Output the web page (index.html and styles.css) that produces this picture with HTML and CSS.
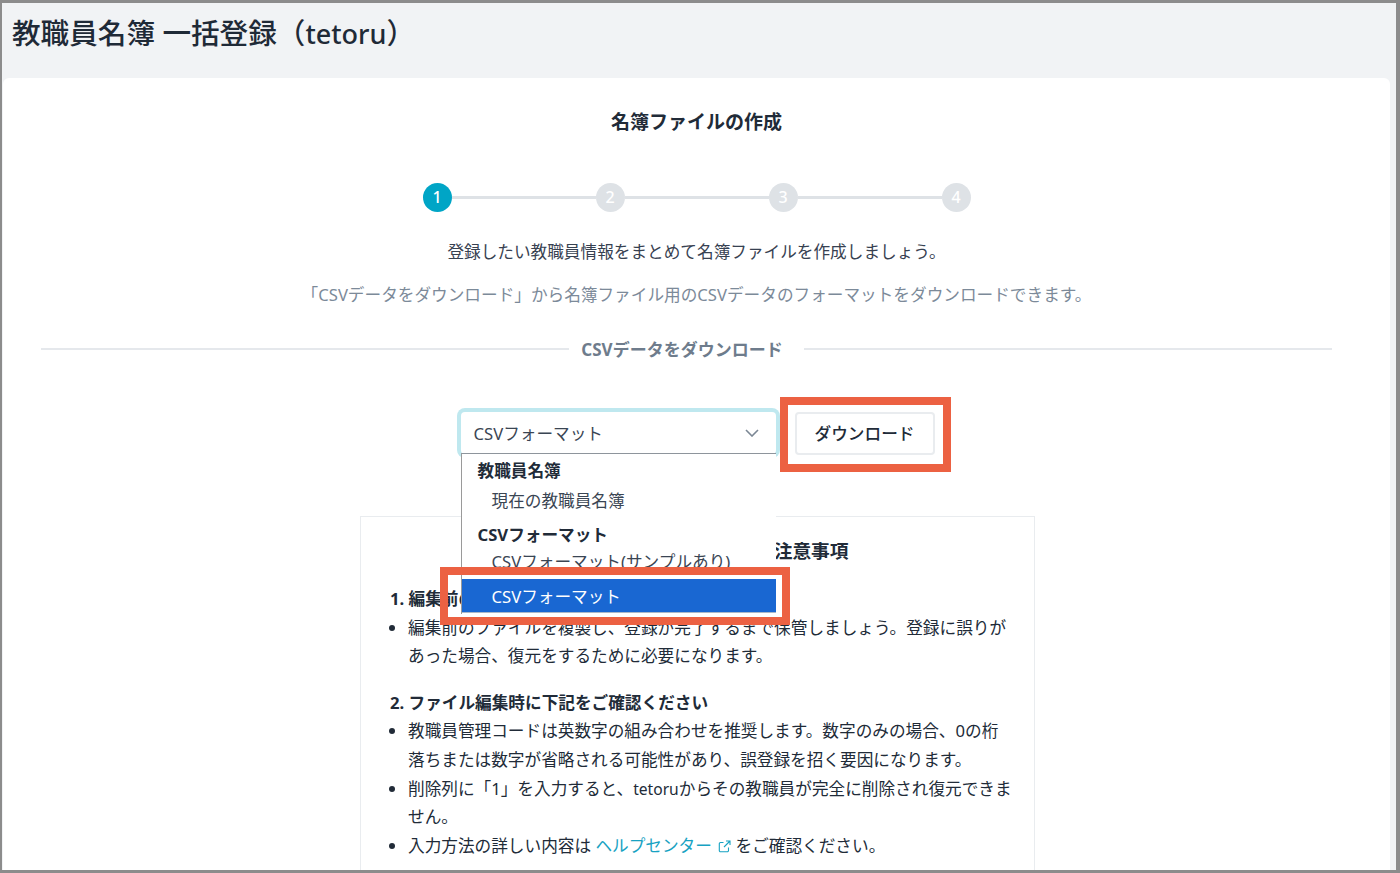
FILE: index.html
```html
<!DOCTYPE html>
<html lang="ja">
<head>
    <meta charset="UTF-8">
    <title>教職員名簿 一括登録（tetoru）</title>
    <link rel="stylesheet" href="styles.css">
</head>
<body>
	<div class="frame">
		<div class="page-header">
			<h1 class="page-title">教職員名簿 一括登録（<span class="title-latin">tetoru</span>）</h1>
		</div>

		<div class="card">
			<h2 class="card-title">名簿ファイルの作成</h2>

			<div class="steps">
				<div class="step active">1</div>
				<div class="step-line"></div>
				<div class="step">2</div>
				<div class="step-line"></div>
				<div class="step">3</div>
				<div class="step-line"></div>
				<div class="step">4</div>
			</div>

			<p class="lead">登録したい教職員情報をまとめて名簿ファイルを作成しましょう。</p>
			<p class="sub">「CSVデータをダウンロード」から名簿ファイル用のCSVデータのフォーマットをダウンロードできます。</p>

			<div class="divider">
				<span class="divider-text">CSVデータをダウンロード</span>
			</div>

			<div class="download-row">
				<div class="select-wrap">
					<div class="select">
						<span>CSVフォーマット</span>
						<svg class="chevron" width="14" height="8" viewBox="0 0 14 8"><path d="M1 1l6 6 6-6" fill="none" stroke="#7b8794" stroke-width="1.6"/></svg>
					</div>
					<div class="dropdown">
						<div class="group">教職員名簿</div>
						<div class="option">現在の教職員名簿</div>
						<div class="group second">CSVフォーマット</div>
						<div class="option clipped">CSVフォーマット(サンプルあり)</div>
						<div class="option selected">CSVフォーマット</div>
					</div>
					<div class="mark mark-option"></div>
				</div>
				<button class="download-button">ダウンロード</button>
				<div class="mark mark-button"></div>
			</div>

			<div class="notes">
				<h3 class="notes-title">名簿ファイル編集に関する注意事項</h3>

				<p class="notes-head">1. 編集前のファイルを保管してください</p>
				<ul class="notes-list">
					<li>編集前のファイルを複製し、登録が完了するまで保管しましょう。登録に誤りがあった場合、復元をするために必要になります。</li>
				</ul>

				<p class="notes-head gap">2. ファイル編集時に下記をご確認ください</p>
				<ul class="notes-list">
					<li>教職員管理コードは英数字の組み合わせを推奨します。数字のみの場合、0の桁落ちまたは数字が省略される可能性があり、誤登録を招く要因になります。</li>
					<li>削除列に「1」を入力すると、<span class="list-latin">tetoru</span>からその教職員が完全に削除され復元できません。</li>
					<li>入力方法の詳しい内容は <a class="link" href="#">ヘルプセンター <svg class="ext" width="13" height="13" viewBox="0 0 13 13"><path d="M10.5 7.5v3a1.2 1.2 0 0 1-1.2 1.2H2.5a1.2 1.2 0 0 1-1.2-1.2V3.7a1.2 1.2 0 0 1 1.2-1.2h3M8 1h4v4M12 1L6 7" fill="none" stroke="#17a2c2" stroke-width="1.1"/></svg></a> をご確認ください。</li>
				</ul>
			</div>
		</div>
	</div>
</body>
</html>
```

FILE: styles.css
```css
* {
	box-sizing: border-box;
}

html, body {
	margin: 0;
	padding: 0;
}

body {
	font-family: "Noto Sans", "Noto Sans CJK JP", sans-serif;
	color: #212b38;
	background: #8c8c8c;
}

.frame {
	width: 1400px;
	height: 873px;
	border-style: solid;
	border-color: #8c8c8c;
	border-width: 3px 4px 3px 2px;
	background: #f1f3f5;
	overflow: hidden;
}

.page-header {
	height: 75px;
	padding: 10px 10px 0;
}

.page-title {
	margin: 0;
	font-size: 28.6px;
	line-height: 40px;
	font-weight: 500;
	color: #1f2a37;
}

.title-latin {
	font-size: 27px;
}

.card {
	width: 1387px;
	margin-left: 1px;
	height: 800px;
	background: #fff;
	border-radius: 6px 6px 0 0;
	padding: 30px 38px 0;
	text-align: center;
}

.card-title {
	margin: 0;
	font-size: 19px;
	line-height: 28px;
	font-weight: 700;
	color: #212b38;
}

.steps {
	display: flex;
	align-items: center;
	justify-content: center;
	margin: 47px 0 0;
}

.step {
	width: 29px;
	height: 29px;
	flex: none;
	border-radius: 50%;
	background: #dee2e6;
	color: #fff;
	font-size: 16px;
	font-weight: 500;
	line-height: 29px;
	text-align: center;
}

.step.active {
	background: #00a5c6;
}

.step-line {
	width: 144px;
	height: 3px;
	background: #dee2e6;
}

.lead {
	margin: 26px 0 0;
	font-size: 16.65px;
	line-height: 28px;
	color: #374151;
}

.sub {
	margin: 15px 0 0;
	font-size: 16.65px;
	line-height: 28px;
	color: #7c8a99;
}

.divider {
	display: flex;
	align-items: center;
	margin: 25px 20px 0 0;
}

.divider::before,
.divider::after {
	content: "";
	flex: 1;
	height: 2px;
	background: #e5e8ec;
}

.divider-text {
	padding: 2px 21px 0 12px;
	font-size: 17px;
	line-height: 28px;
	font-weight: 700;
	color: #6e7c8c;
}

.download-row {
	position: relative;
	display: flex;
	justify-content: center;
	gap: 19px;
	margin: 48px 0 0 2px;
}

.select-wrap {
	position: relative;
	width: 315px;
}

.select {
	display: flex;
	align-items: center;
	justify-content: space-between;
	height: 42px;
	padding: 0 17px 0 13px;
	background: #fff;
	border-radius: 4px;
	box-shadow: 0 0 0 4px #bfe8ef;
	font-size: 16.65px;
	color: #3a4553;
	text-align: left;
}

.download-button {
	width: 140px;
	height: 43px;
	padding: 0 0 2px;
	background: #fff;
	border: 2px solid #e9ecef;
	border-radius: 4px;
	font-family: inherit;
	font-size: 16.65px;
	font-weight: 500;
	color: #212b38;
}

.dropdown {
	position: absolute;
	left: 0;
	top: 41px;
	width: 315px;
	height: 161px;
	background: #fff;
	border-top: 1px solid #8e959c;
	border-left: 1px solid #9a9a9a;
	overflow: hidden;
	font-size: 16.65px;
	text-align: left;
	z-index: 2;
}

.group {
	padding-left: 16px;
	font-weight: 700;
	line-height: 34px;
	height: 34px;
}

.group.second {
	margin-top: 4px;
	line-height: 33px;
	height: 33px;
}

.option {
	padding-left: 30px;
	line-height: 26px;
	height: 26px;
	color: #3a4553;
}

.option.clipped {
	height: 28px;
	line-height: 22px;
	overflow: hidden;
}

.option.selected {
	height: 34px;
	line-height: 35px;
	background: #1967d2;
	border-bottom: 1px solid #a9b8c9;
	color: #fff;
}

.mark {
	position: absolute;
	border: 8px solid #ec6142;
	z-index: 3;
}

.mark-option {
	left: -21px;
	top: 155px;
	width: 350px;
	height: 58px;
}

.mark-button {
	left: 737px;
	top: -15px;
	width: 171px;
	height: 75px;
}

.notes {
	width: 675px;
	margin: 61px 0 0 319px;
	padding: 18px 22px 40px 29px;
	background: #fff;
	border: 1px solid #e9ecef;
	text-align: left;
	font-size: 16.65px;
	line-height: 28.6px;
}

.notes-title {
	margin: 0 0 18px -4px;
	font-size: 18.7px;
	line-height: 32px;
	font-weight: 700;
	text-align: center;
}

.notes-head {
	margin: 0;
	font-weight: 700;
}

.notes-head.gap {
	margin-top: 18px;
}

.notes-list {
	margin: 0;
	padding: 0 0 0 18px;
}

.list-latin {
	font-size: 15.6px;
}

.link {
	color: #17a2c2;
	text-decoration: none;
}

.ext {
	vertical-align: -1px;
	margin-left: 2px;
}
```
